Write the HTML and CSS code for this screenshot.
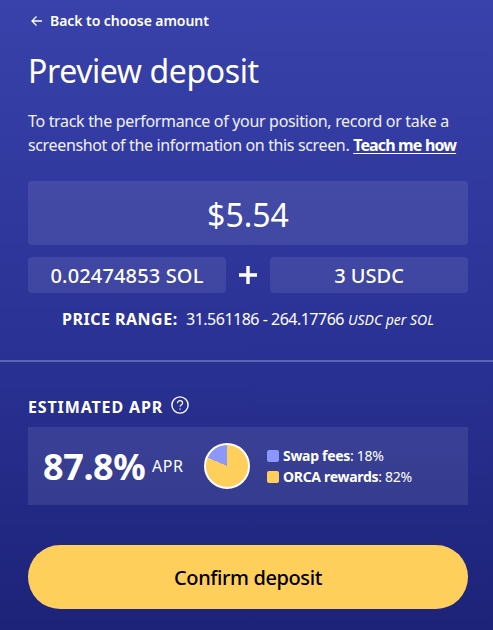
FILE: index.html
```html
<!DOCTYPE html>
<html lang="en">
<head>
    <meta charset="UTF-8">
    <meta name="viewport" content="width=device-width, initial-scale=1.0">
    <title>Preview deposit</title>
    <link rel="stylesheet" href="styles.css">
</head>
<body>
    <main class="deposit">
        <a class="back" href="#">
            <svg class="back-icon" viewBox="0 0 12 12" fill="none" stroke="#fff" stroke-width="1.3">
                <path d="M11 6H1M5.5 1.5L1 6l4.5 4.5"/>
            </svg>
            <span>Back to choose amount</span>
        </a>

        <h1>Preview deposit</h1>

        <p class="intro">
            To track the performance of your position, record or take a<br>
            <span class="intro-end">screenshot of the information on this screen.</span> <a class="teach" href="#">Teach me how</a>
        </p>

        <!-- Amounts -->
        <div class="total">$5.54</div>
        <div class="tokens">
            <div class="token token-sol">0.02474853 SOL</div>
            <svg class="plus" viewBox="0 0 18 18" stroke="#fff" stroke-width="3.4">
                <path d="M0 9h18M9 0v18"/>
            </svg>
            <div class="token">3 USDC</div>
        </div>
        <div class="range">
            <span class="range-label">PRICE RANGE:</span>
            <span class="range-value">31.561186 - 264.17766</span>
            <span class="range-unit">USDC per SOL</span>
        </div>

        <hr>

        <!-- APR -->
        <h2>
            <span>ESTIMATED APR</span>
            <svg class="help" viewBox="0 0 18 18" fill="none" stroke="#fff" stroke-width="1.4">
                <circle cx="9" cy="9" r="8.1"/>
                <path d="M6.4 7.2C6.4 5.6 7.5 4.7 9 4.7s2.6.9 2.6 2.3c0 1.8-2.5 1.8-2.5 3.8M9.1 12.4v1.4" stroke-width="1.2"/>
            </svg>
        </h2>
        <div class="apr">
            <span class="apr-value">87.8%</span>
            <span class="apr-label">APR</span>
            <div class="pie"></div>
            <ul class="legend">
                <li><i class="swatch swatch-fees"></i><span><b>Swap fees</b>: 18%</span></li>
                <li><i class="swatch swatch-orca"></i><span><b>ORCA rewards</b>: 82%</span></li>
            </ul>
        </div>

        <button class="confirm" type="button">Confirm deposit</button>
    </main>
</body>
</html>
```
FILE: styles.css
```css
* {
    box-sizing: border-box;
}

body {
    margin: 0;
    height: 630px;
    overflow: hidden;
    color: #ffffff;
    font-family: "Noto Sans", "Open Sans", sans-serif;
    font-size: 16px;
    white-space: nowrap;
    background: linear-gradient(#3942aa, #2a3295 54%, #1d2378);
}

.deposit {
    padding: 8px 25px 0 28px;
}

.back {
    display: flex;
    align-items: center;
    height: 24px;
    gap: 7px;
    color: #ffffff;
    font-size: 14px;
    font-weight: 600;
    letter-spacing: -0.06px;
    text-decoration: none;
}

.back-icon {
    width: 12px;
    height: 12px;
    margin: 2px 0 0 3px;
}

h1 {
    margin: 15px 0 0;
    font-size: 32px;
    font-weight: 400;
    line-height: 48px;
    letter-spacing: -0.4px;
}

.intro {
    margin: 14px 0 24px;
    color: #f0f1fa;
    font-size: 16px;
    line-height: 24px;
    letter-spacing: -0.32px;
}

.intro-end {
    letter-spacing: -0.36px;
}

.teach {
    color: #ffffff;
    font-weight: 700;
    letter-spacing: -0.85px;
    text-underline-offset: 2px;
}

.total {
    display: flex;
    align-items: center;
    justify-content: center;
    height: 64px;
    padding-top: 2px;
    border-radius: 4px;
    background-color: rgba(255, 255, 255, 0.09);
    font-size: 32px;
}

.tokens {
    display: grid;
    grid-template-columns: 198px 18px 198px;
    justify-content: space-between;
    align-items: center;
    margin-top: 12px;
}

.token {
    height: 36px;
    border-radius: 4px;
    background-color: rgba(255, 255, 255, 0.09);
    font-size: 20px;
    font-weight: 500;
    line-height: 38px;
    text-align: center;
}

.token-sol {
    letter-spacing: 0.15px;
}

.plus {
    width: 18px;
    height: 18px;
}

.range {
    display: flex;
    align-items: baseline;
    height: 24px;
    margin: 14px 0 29px 34px;
    line-height: 24px;
}

.range-label {
    width: 124px;
    font-weight: 700;
    letter-spacing: 0.5px;
}

.range-value {
    width: 162px;
    letter-spacing: -0.5px;
}

.range-unit {
    font-size: 14px;
    font-style: italic;
}

hr {
    height: 2px;
    margin: 0 -25px 0 -28px;
    border: none;
    background-color: #5c63b1;
}

h2 {
    display: flex;
    gap: 8px;
    height: 24px;
    margin: 33px 0 8px;
    font-size: 16px;
    line-height: 24px;
    letter-spacing: 0.87px;
}

.help {
    width: 18px;
    height: 18px;
    margin-top: 1px;
}

.apr {
    display: flex;
    align-items: center;
    height: 78px;
    padding-left: 15px;
    background-color: rgba(255, 255, 255, 0.09);
}

.apr-value {
    width: 109px;
    font-size: 36px;
    font-weight: 700;
    letter-spacing: -0.4px;
}

.apr-label {
    width: 52px;
    letter-spacing: 0.6px;
}

.pie {
    width: 46px;
    height: 46px;
    border: 2px solid #ffffff;
    border-radius: 50%;
    background: conic-gradient(#ffcf5c 81.5%, #8b97fa 81.5%) border-box;
}

.legend {
    margin: 0 0 0 17px;
    padding: 0;
    font-size: 14px;
    line-height: 21px;
    letter-spacing: -0.3px;
    list-style: none;
}

.legend li {
    display: flex;
    align-items: center;
    gap: 4px;
}

.swatch {
    width: 12px;
    height: 12px;
    border-radius: 2px;
}

.swatch-fees {
    background-color: #8b97fa;
}

.swatch-orca {
    background-color: #ffcf5c;
}

.confirm {
    display: block;
    width: 440px;
    height: 64px;
    margin-top: 40px;
    border: none;
    border-radius: 32px;
    background-color: #ffcf5c;
    color: #000000;
    font-family: inherit;
    font-size: 20px;
    font-weight: 500;
    letter-spacing: -0.4px;
    cursor: pointer;
}
```
